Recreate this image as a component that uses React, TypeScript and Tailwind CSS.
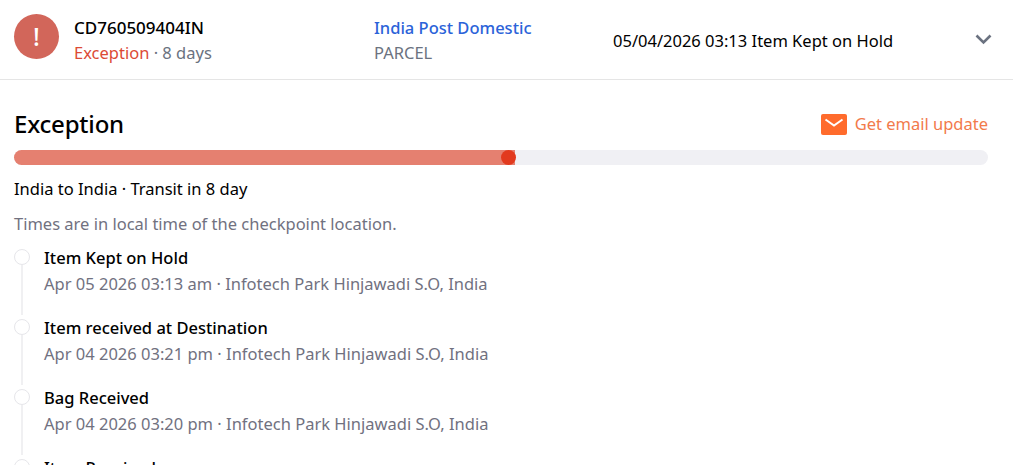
const font = "font-['Noto_Sans',sans-serif]"

const checkpoints = [
  { title: "Item Kept on Hold", meta: "Apr 05 2026 03:13 am · Infotech Park Hinjawadi S.O, India" },
  { title: "Item received at Destination", meta: "Apr 04 2026 03:21 pm · Infotech Park Hinjawadi S.O, India" },
  { title: "Bag Received", meta: "Apr 04 2026 03:20 pm · Infotech Park Hinjawadi S.O, India" },
  { title: "Item Received", meta: "Apr 04 2026 03:20 pm · Infotech Park Hinjawadi S.O, India" },
]

function MailIcon() {
  return (
    <svg width="26" height="21" viewBox="0 0 26 21">
      <rect width="26" height="21" rx="2" fill="#ff6b2c" />
      <path d="M4.5 5.5 13 11.5 21.5 5.5" fill="none" stroke="#fff" strokeWidth="2" />
    </svg>
  )
}

function Chevron() {
  return (
    <svg width="17" height="11" viewBox="0 0 17 11">
      <path d="M1.5 1.5 8.5 8.5l7-7" fill="none" stroke="#6b7280" strokeWidth="2.6" />
    </svg>
  )
}

export default function App() {
  return (
    <div className={`${font} h-screen overflow-hidden bg-white text-[16.5px] text-black`}>
      <div className="flex h-20 items-center border-b border-[#e5e5e5] pl-[14px] pr-[21px]">
        <div className="mb-[6px] flex h-[45px] w-[45px] shrink-0 items-center justify-center rounded-full bg-[#d2665a] text-[25px] font-medium text-white">
          !
        </div>
        <div className="ml-[15px] w-[300px] leading-[25px]">
          <div className="text-[17px] font-medium">CD760509404IN</div>
          <div className="text-[#6b7280]">
            <span className="text-[#dc4a35]">Exception</span> · 8 days
          </div>
        </div>
        <div className="w-[239px] leading-[25px]">
          <div className="font-medium text-[#2b63d9]">India Post Domestic</div>
          <div className="text-[#6b7280]">PARCEL</div>
        </div>
        <div className="flex-1 pt-[4px]">05/04/2026 03:13 Item Kept on Hold</div>
        <Chevron />
      </div>

      <div className="pl-[14px] pr-[25px]">
        <div className="mt-[28px] flex items-center justify-between">
          <h1 className="text-[24px] font-medium leading-[32px] tracking-[-0.2px]">Exception</h1>
          <div className="flex items-center gap-[8px] text-[#f27a4b]">
            <MailIcon />
            <span>Get email update</span>
          </div>
        </div>

        <div className="relative mt-[10px] h-[15px] rounded-full bg-[#f0f0f4]">
          <div className="h-full w-[501px] rounded-l-full bg-[#e58070]" />
          <div className="absolute left-[487px] top-0 h-[15px] w-[15px] rounded-full bg-[#e23a1e]" />
        </div>

        <div className="mt-[13px] leading-[22px]">India to India · Transit in 8 day</div>
        <div className="mt-[13px] leading-[22px] text-[#71717f]">Times are in local time of the checkpoint location.</div>

        <div className="mt-[10px]">
          {checkpoints.map((c) => (
            <div key={c.title} className="flex h-[70px]">
              <div className="flex w-[30px] shrink-0 flex-col items-start">
                <div className="mt-[4px] h-[16px] w-[16px] rounded-full border-[1.5px] border-[#e6e6ea] bg-white" />
                <div className="ml-[7px] w-[2px] flex-1 bg-[#f0f0f2]" />
              </div>
              <div className="leading-[25px]">
                <div className="font-medium">{c.title}</div>
                <div className="mt-px text-[#71717f]">{c.meta}</div>
              </div>
            </div>
          ))}
        </div>
      </div>
    </div>
  )
}
